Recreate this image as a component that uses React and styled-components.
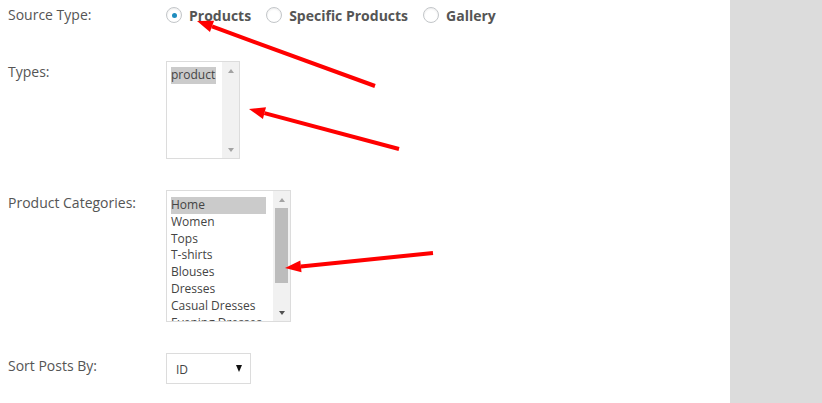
import styled, { createGlobalStyle } from "styled-components";

const GlobalStyle = createGlobalStyle`
  html, body {
    margin: 0;
    padding: 0;
    background: #fff;
  }
  body {
    font-family: "Open Sans", "Liberation Sans", sans-serif;
    color: #555;
  }
`;

const Page = styled.div`
  display: flex;
  width: 822px;
  height: 403px;
  overflow: hidden;
`;

const Main = styled.div`
  position: relative;
  width: 730px;
  padding-left: 8px;
  box-sizing: border-box;
`;

const Sidebar = styled.div`
  flex: 1;
  background: #dcdcdc;
`;

const Row = styled.div`
  display: grid;
  grid-template-columns: 158px auto;
  margin-top: ${(p) => p.$top}px;
`;

const Label = styled.div`
  font-size: 14px;
  line-height: 18px;
  color: #555;
  padding-top: ${(p) => p.$pad || 0}px;
`;

const RadioGroup = styled.div`
  display: flex;
  align-items: center;
  height: 18px;
`;

const RadioItem = styled.label`
  display: flex;
  align-items: center;
  gap: 7px;
  margin-right: 15px;
  font-size: 14px;
  font-weight: 700;
  color: #555;
`;

const RadioCircle = styled.span`
  width: 14px;
  height: 14px;
  border: 1px solid #c3c6c9;
  border-radius: 50%;
  box-shadow: inset 0 1px 2px rgba(0, 0, 0, 0.08);
  display: flex;
  align-items: center;
  justify-content: center;
  &::after {
    content: "";
    display: ${(p) => (p.$checked ? "block" : "none")};
    width: 5px;
    height: 5px;
    border-radius: 50%;
    background: #1e8cbe;
  }
`;

const ListBox = styled.div`
  display: flex;
  width: ${(p) => p.$w}px;
  height: ${(p) => p.$h}px;
  border: 1px solid #dcdcdc;
  box-sizing: border-box;
  overflow: hidden;
`;

const Options = styled.div`
  flex: 1;
  padding: ${(p) => p.$padTop}px ${(p) => p.$padRight}px 0 4px;
  overflow: hidden;
`;

const Option = styled.div`
  font-size: 12px;
  line-height: 16.8px;
  white-space: nowrap;
  color: #444;
  background: ${(p) => (p.$selected ? "#cbcbcb" : "transparent")};
`;

const ScrollTrack = styled.div`
  width: 17px;
  background: #f1f1f1;
  display: flex;
  flex-direction: column;
  align-items: center;
`;

const ScrollArrow = styled.div`
  height: 17px;
  width: 17px;
  display: flex;
  align-items: center;
  justify-content: center;
  &::after {
    content: "";
    border-left: 3.5px solid transparent;
    border-right: 3.5px solid transparent;
    ${(p) =>
      p.$down
        ? `border-top: 4px solid ${p.$dark ? "#505050" : "#a3a3a3"};`
        : `border-bottom: 4px solid ${p.$dark ? "#505050" : "#a3a3a3"};`}
  }
`;

const ScrollSpace = styled.div`
  flex: 1;
  width: 100%;
  display: flex;
  justify-content: center;
`;

const Thumb = styled.div`
  width: 13px;
  height: 75px;
  background: #bcbcbc;
`;

const Dropdown = styled.div`
  width: 85px;
  height: 31px;
  border: 1px solid #dcdcdc;
  box-sizing: border-box;
  display: flex;
  align-items: center;
  justify-content: space-between;
  padding: 2px 8px 0 9px;
  font-size: 12px;
  color: #444;
`;

const Caret = styled.span`
  border-left: 3.5px solid transparent;
  border-right: 3.5px solid transparent;
  border-top: 7px solid #111;
  margin-bottom: 2px;
`;

const Overlay = styled.svg`
  position: absolute;
  left: 0;
  top: 0;
  pointer-events: none;
`;

const categories = [
  "Home",
  "Women",
  "Tops",
  "T-shirts",
  "Blouses",
  "Dresses",
  "Casual Dresses",
  "Evening Dresses",
];

const Arrow = ({ x1, y1, x2, y2 }) => {
  const ang = Math.atan2(y2 - y1, x2 - x1);
  const len = 16;
  const half = 6;
  const bx = x2 - len * Math.cos(ang);
  const by = y2 - len * Math.sin(ang);
  const px = -Math.sin(ang) * half;
  const py = Math.cos(ang) * half;
  return (
    <g>
      <line x1={x1} y1={y1} x2={bx} y2={by} stroke="#f00" strokeWidth="4" />
      <polygon
        points={`${x2},${y2} ${bx + px},${by + py} ${bx - px},${by - py}`}
        fill="#f00"
      />
    </g>
  );
};

const App = () => {
  return (
    <>
      <GlobalStyle />
      <Page>
        <Main>
          <Row $top={6}>
            <Label>Source Type:</Label>
            <RadioGroup>
              <RadioItem>
                <RadioCircle $checked />
                Products
              </RadioItem>
              <RadioItem>
                <RadioCircle />
                Specific Products
              </RadioItem>
              <RadioItem>
                <RadioCircle />
                Gallery
              </RadioItem>
            </RadioGroup>
          </Row>

          <Row $top={37}>
            <Label $pad={2}>Types:</Label>
            <ListBox $w={74} $h={98}>
              <Options $padTop={5} $padRight={6}>
                <Option $selected>product</Option>
              </Options>
              <ScrollTrack>
                <ScrollArrow />
                <ScrollSpace />
                <ScrollArrow $down />
              </ScrollTrack>
            </ListBox>
          </Row>

          <Row $top={31}>
            <Label $pad={4}>Product Categories:</Label>
            <ListBox $w={125} $h={132}>
              <Options $padTop={6} $padRight={7}>
                {categories.map((c, i) => (
                  <Option key={c} $selected={i === 0}>
                    {c}
                  </Option>
                ))}
              </Options>
              <ScrollTrack>
                <ScrollArrow />
                <ScrollSpace>
                  <Thumb />
                </ScrollSpace>
                <ScrollArrow $down $dark />
              </ScrollTrack>
            </ListBox>
          </Row>

          <Row $top={31}>
            <Label $pad={4}>Sort Posts By:</Label>
            <Dropdown>
              ID
              <Caret />
            </Dropdown>
          </Row>

          <Overlay width="730" height="403">
            <Arrow x1={375} y1={86} x2={197} y2={21} />
            <Arrow x1={399} y1={149} x2={249} y2={109} />
            <Arrow x1={433} y1={253} x2={285} y2={268} />
          </Overlay>
        </Main>
        <Sidebar />
      </Page>
    </>
  );
};

export default App;
